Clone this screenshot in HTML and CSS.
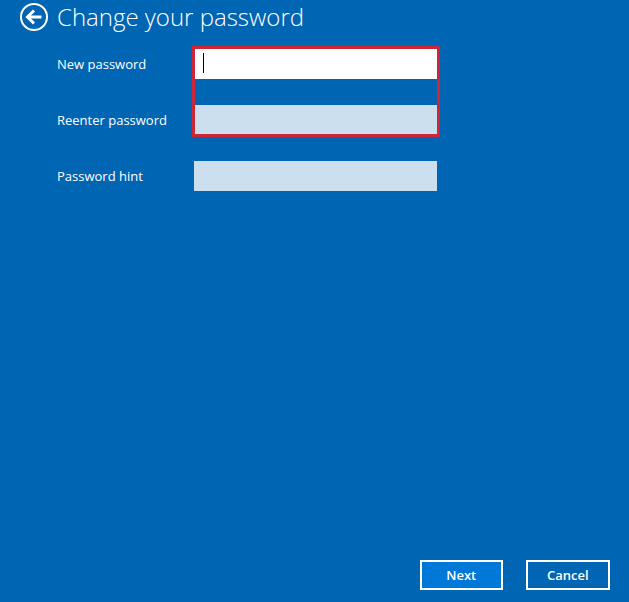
FILE: index.html
```html
<!DOCTYPE html>
<html lang="en">
<head>
    <meta charset="UTF-8">
    <meta name="viewport" content="width=device-width, initial-scale=1.0">
    <title>Change your password</title>
    <link rel="stylesheet" href="styles.css">
</head>
<body>
    <div class="page">
        <div class="header">
            <button class="back-button" aria-label="Back">
                <svg width="30" height="30" viewBox="0 0 30 30" fill="none" xmlns="http://www.w3.org/2000/svg">
                    <circle cx="15" cy="15" r="13" stroke="currentColor" stroke-width="2"/>
                    <path d="M22.5 15H9" stroke="currentColor" stroke-width="3"/>
                    <path d="M15 8.5L8.5 15L15 21.5" stroke="currentColor" stroke-width="3"/>
                </svg>
            </button>
            <h1>Change your password</h1>
        </div>

        <div class="form">
            <div class="highlight"></div>
            <div class="row">
                <label for="newPassword">New password</label>
                <div class="field active" id="newPassword"><span class="caret"></span></div>
            </div>
            <div class="row">
                <label for="reenterPassword">Reenter password</label>
                <div class="field" id="reenterPassword"></div>
            </div>
            <div class="row">
                <label for="passwordHint">Password hint</label>
                <div class="field" id="passwordHint"></div>
            </div>
        </div>

        <div class="footer">
            <button class="button primary">Next</button>
            <button class="button">Cancel</button>
        </div>
    </div>
</body>
</html>
```

FILE: styles.css
```css
* {
    box-sizing: border-box;
}

body {
    margin: 0;
    background-color: #0065b3;
    color: #fff;
    font-family: "Open Sans", sans-serif;
}

.page {
    display: flex;
    flex-direction: column;
    height: 602px;
    padding: 2px 19.5px 12px 19px;
}

.header {
    display: flex;
    align-items: center;
    gap: 8px;
    height: 30px;
}

.back-button {
    display: flex;
    padding: 0;
    background: none;
    border: none;
    color: #fff;
}

h1 {
    margin: 0;
    font-size: 24px;
    font-weight: 300;
    line-height: 30px;
}

.form {
    position: relative;
    display: flex;
    flex-direction: column;
    gap: 26px;
    margin-top: 17px;
    padding-left: 38px;
}

.highlight {
    position: absolute;
    top: -3px;
    left: 173px;
    width: 248px;
    height: 91px;
    border: 3px solid #cd2637;
}

.row {
    display: flex;
    align-items: center;
    height: 30px;
}

.row label {
    width: 137px;
    font-size: 13px;
}

.field {
    width: 243px;
    height: 30px;
    background-color: #cbdfef;
}

.field.active {
    display: flex;
    align-items: center;
    padding-left: 9px;
    background-color: #fff;
}

.caret {
    width: 1px;
    height: 20px;
    margin-top: -2px;
    background-color: #000;
}

.footer {
    display: flex;
    justify-content: flex-end;
    gap: 23px;
    margin-top: auto;
}

.button {
    width: 83.5px;
    height: 30px;
    padding: 0;
    background-color: #0065b3;
    border: 2px solid #fff;
    color: #fff;
    font-family: inherit;
    font-size: 13px;
    font-weight: 600;
}

.button.primary {
    background-color: #0078d7;
}
```
